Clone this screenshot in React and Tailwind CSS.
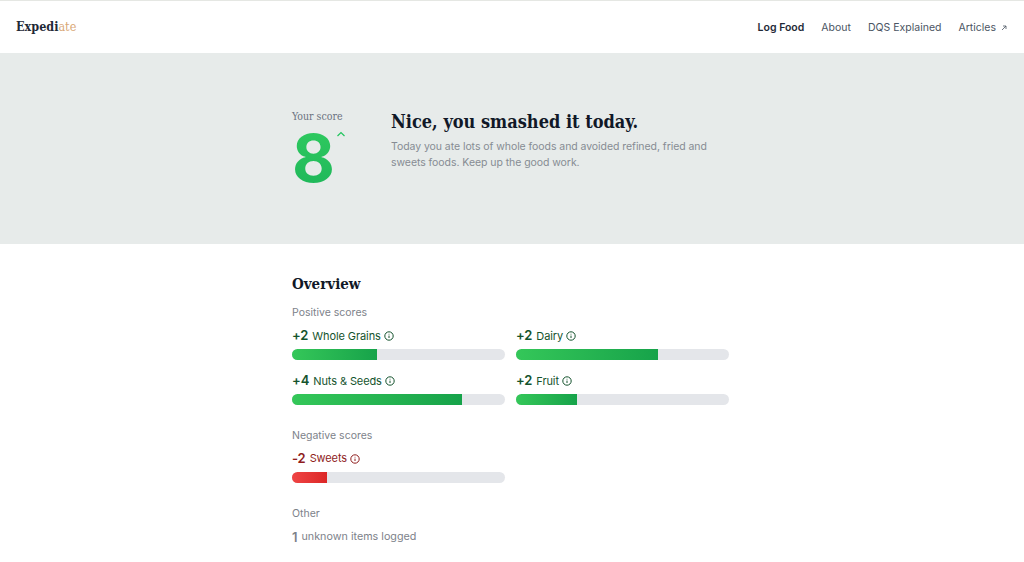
const serif = "font-['DejaVu_Serif_Condensed','DejaVu_Serif',serif]";

function InfoIcon() {
  return (
    <svg width="10" height="10" viewBox="0 0 10 10" fill="none" stroke="currentColor" strokeWidth="1" className="shrink-0">
      <circle cx="5" cy="5" r="4.2" />
      <path d="M5 4.6v2.4M5 2.8v.7" />
    </svg>
  );
}

function ScoreBar({ score, label, percent, negative }) {
  return (
    <div>
      <div className={`flex h-[18px] items-center text-[11px] tracking-[-0.1px] ${negative ? "text-[#8f1d1d]" : "text-[#14532d]"}`}>
        <span className="mr-[4px] text-[13px] font-semibold">{score}</span>
        <span className="mr-[3px]">{label}</span>
        <InfoIcon />
      </div>
      <div className="mt-[4px] h-[11px] w-full overflow-hidden rounded-full bg-[#e4e6ea]">
        <div
          className={`h-full bg-gradient-to-r ${negative ? "from-[#ef4444] to-[#dc2626]" : "from-[#34c759] to-[#16a34a]"}`}
          style={{ width: `${percent}%` }}
        />
      </div>
    </div>
  );
}

export default function App() {
  return (
    <div className="min-h-[562px] bg-white font-['Inter',sans-serif] text-[#6b7280]">
      <header className="flex h-[53px] items-center justify-between border-t border-[#e5e7e3] pl-4 pr-[17px]">
        <div className={`${serif} text-[12.5px] font-bold text-[#1f2937]`}>
          Expedi<span className="font-normal text-[#d9a877]">ate</span>
        </div>
        <nav className="mt-[1px] flex items-center gap-[17px] text-[10.5px] text-[#4b5563]">
          <span className="font-semibold text-[#1f2937]">Log Food</span>
          <span>About</span>
          <span>DQS Explained</span>
          <span className="flex items-center gap-[5px]">
            Articles
            <svg width="6" height="6" viewBox="0 0 6 6" fill="none" stroke="currentColor" strokeWidth="0.8">
              <path d="M1 5l4-4M2 1h3v3" />
            </svg>
          </span>
        </nav>
      </header>

      <section className="h-[191px] bg-[#e7ebea]">
        <div className="ml-[292px] flex pt-[57px]">
          <div className="relative w-[99px]">
            <div className={`${serif} text-[10.5px] leading-[13px] text-[#6b7280]`}>Your score</div>
            <div className="mt-[7px] w-fit bg-gradient-to-b from-[#2ec95f] to-[#1fb85a] bg-clip-text text-[66px] font-bold leading-[56px] text-transparent">8</div>
            <svg width="10" height="6" viewBox="0 0 10 6" fill="none" stroke="#22c55e" strokeWidth="1.2" className="absolute left-[44px] top-[21px]">
              <path d="M1.500 5L5 1.500 8.500 5" />
            </svg>
          </div>
          <div>
            <h1 className={`${serif} text-[18px] font-bold leading-[24px] text-[#111827]`}>Nice, you smashed it today.</h1>
            <p className="mt-[5px] w-[330px] text-[10.5px] leading-[16px] tracking-[-0.06px] text-[#868b93]">
              Today you ate lots of whole foods and avoided refined, fried and sweets foods. Keep up the good work.
            </p>
          </div>
        </div>
      </section>

      <main className="ml-[292px] w-[437px] pt-[30px]">
        <h2 className={`${serif} text-[15px] font-bold leading-[20px] text-[#111827]`}>Overview</h2>
        <div className="mt-[12px] text-[10.5px] leading-[14px] text-[#7d828a]">Positive scores</div>
        <div className="mt-[7px] grid grid-cols-2 gap-x-[11px] gap-y-[12px]">
          <ScoreBar score="+2" label="Whole Grains" percent={40} />
          <ScoreBar score="+2" label="Dairy" percent={66.500} />
          <ScoreBar score="+4" label="Nuts & Seeds" percent={80} />
          <ScoreBar score="+2" label="Fruit" percent={28.500} />
        </div>
        <div className="mt-[24px] text-[10.5px] leading-[14px] text-[#7d828a]">Negative scores</div>
        <div className="mt-[6.5px] grid grid-cols-2 gap-x-[11px]">
          <ScoreBar score="-2" label="Sweets" percent={16.500} negative />
        </div>
        <div className="mt-[24px] text-[10.5px] leading-[14px] text-[#7d828a]">Other</div>
        <div className="mt-[9px] flex items-center text-[10.75px] leading-[14px] text-[#7d828a]">
          <span className="mr-1 text-[13px] font-semibold">1</span>unknown items logged
        </div>
      </main>
    </div>
  );
}
